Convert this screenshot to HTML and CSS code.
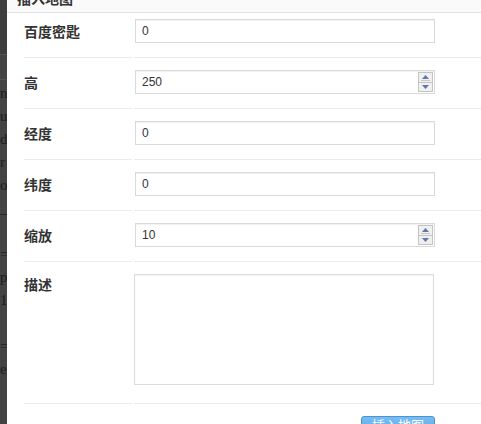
FILE: index.html
```html
<!DOCTYPE html>
<html lang="zh-CN">
<head>
  <meta charset="UTF-8" />
  <title>插入地图</title>
  <link rel="stylesheet" href="styles.css">
</head>
<body>
  <div class="backdrop">
    <div class="code">
      <span>n</span>
      <span>u</span>
      <span>d,</span>
      <span>r</span>
      <span>o</span>
      <span>_f</span>
      <span>&nbsp;</span>
      <span>='</span>
      <span>p;</span>
      <span>1</span>
      <span>&nbsp;</span>
      <span>='</span>
      <span>e</span>
    </div>
  </div>

  <div class="modal">
    <div class="modal-header">
      <h3>插入地图</h3>
    </div>

    <div class="modal-body">
      <div class="row first">
        <label class="label">百度密匙</label>
        <div class="field"><input class="input" type="text" value="0"></div>
      </div>
      <div class="row">
        <label class="label">高</label>
        <div class="field">
          <div class="spin-wrap">
            <input class="input" type="text" value="250">
            <span class="spinner">
              <span class="spin-up"><svg width="7" height="4" viewBox="0 0 7 4"><path d="M3.5 0 L7 4 L0 4 Z" fill="#6275ad"/></svg></span>
              <span class="spin-down"><svg width="7" height="4" viewBox="0 0 7 4"><path d="M0 0 L7 0 L3.5 4 Z" fill="#6275ad"/></svg></span>
            </span>
          </div>
        </div>
      </div>
      <div class="row">
        <label class="label">经度</label>
        <div class="field"><input class="input" type="text" value="0"></div>
      </div>
      <div class="row">
        <label class="label">纬度</label>
        <div class="field"><input class="input" type="text" value="0"></div>
      </div>
      <div class="row">
        <label class="label">缩放</label>
        <div class="field">
          <div class="spin-wrap">
            <input class="input" type="text" value="10">
            <span class="spinner">
              <span class="spin-up"><svg width="7" height="4" viewBox="0 0 7 4"><path d="M3.5 0 L7 4 L0 4 Z" fill="#6275ad"/></svg></span>
              <span class="spin-down"><svg width="7" height="4" viewBox="0 0 7 4"><path d="M0 0 L7 0 L3.5 4 Z" fill="#6275ad"/></svg></span>
            </span>
          </div>
        </div>
      </div>
      <div class="row tall">
        <label class="label">描述</label>
        <div class="field"><textarea class="textarea"></textarea></div>
      </div>
      <div class="row">
        <div class="label"></div>
        <div class="field actions">
          <button class="btn-primary">插入地图</button>
        </div>
      </div>
    </div>
  </div>
</body>
</html>
```

FILE: styles.css
```css
html, body {
  margin: 0;
  height: 100%;
  overflow: hidden;
}

body {
  display: flex;
  background: #fff;
  font-family: "Liberation Sans", "Noto Sans CJK SC", sans-serif;
  color: #333;
}

.backdrop {
  width: 7px;
  flex-shrink: 0;
  overflow: hidden;
  background: linear-gradient(#3d3d3d 0, #3d3d3d 54px, #555 54px, #555 55px, #434343 55px, #434343 79px, #555 79px, #555 80px, #434343 80px);
}

.code {
  display: flex;
  flex-direction: column;
  padding-top: 82px;
  width: 7px;
  overflow: hidden;
  font-family: "Liberation Serif", serif;
  font-size: 15px;
  line-height: 23px;
  color: #1e1e1e;
  white-space: nowrap;
}

.modal {
  flex: 1;
  background: #fff;
}

.modal-header {
  height: 12px;
  overflow: hidden;
  background: #fafafa;
  border-bottom: 1px solid #e3e3e3;
  padding-left: 10px;
}

.modal-header h3 {
  margin: -12px 0 0;
  font-size: 14px;
  line-height: 20px;
  font-weight: 700;
  color: #333;
  font-family: "Noto Sans CJK SC", sans-serif;
}

.modal-body {
  padding-left: 17px;
}

.row {
  display: flex;
  gap: 2px;
}

.label,
.field {
  border-top: 1px solid #ebebeb;
  padding: 12px 0 14px;
}

.row.first .label,
.row.first .field {
  border-top: none;
  padding-top: 6px;
}

.row.tall .label,
.row.tall .field {
  padding-bottom: 18px;
}

.label {
  width: 108px;
  flex-shrink: 0;
  font-family: "Noto Sans CJK SC", sans-serif;
  font-size: 14px;
  font-weight: 700;
  line-height: 24px;
  color: #333;
}

.row.tall .label {
  line-height: 20px;
}

.field {
  flex: 1;
}

.input {
  display: block;
  box-sizing: border-box;
  width: 300px;
  height: 24px;
  margin: 0 0 0 1px;
  padding: 0 6px;
  border: 1px solid #d9d9d9;
  box-shadow: inset 0 1px 1px rgba(0, 0, 0, 0.06);
  font-family: "Liberation Sans", sans-serif;
  font-size: 12px;
  color: #333;
  background: #fff;
  outline: none;
}

.spin-wrap {
  position: relative;
  width: 301px;
}

.spinner {
  position: absolute;
  top: 2px;
  right: 2px;
  width: 15px;
  height: 20px;
  box-sizing: border-box;
  border: 1px solid #c4c4c4;
  display: flex;
  flex-direction: column;
  background: #f0f0f0;
}

.spin-up,
.spin-down {
  flex: 1;
  display: flex;
  align-items: center;
  justify-content: center;
}

.spin-up {
  border-bottom: 1px solid #c4c4c4;
  position: relative;
}

.spin-up::after {
  content: "";
  position: absolute;
  left: 2px;
  right: 2px;
  bottom: 1px;
  height: 1px;
  background: #c8c8c8;
}

.textarea {
  display: block;
  box-sizing: border-box;
  width: 300px;
  height: 111px;
  margin: 0;
  border: 1px solid #dcdcdc;
  box-shadow: inset 0 1px 1px rgba(0, 0, 0, 0.05);
  resize: none;
  outline: none;
}

.actions {
  display: flex;
}

.btn-primary {
  margin-left: 227px;
  width: 74px;
  height: 28px;
  border: 1px solid #4b93d6;
  border-radius: 3px;
  background: linear-gradient(#76bdf2, #4e9de2);
  color: #fff;
  font-family: "Noto Sans CJK SC", sans-serif;
  font-size: 13px;
  padding: 0 0 10px;
  line-height: 16px;
}
```
